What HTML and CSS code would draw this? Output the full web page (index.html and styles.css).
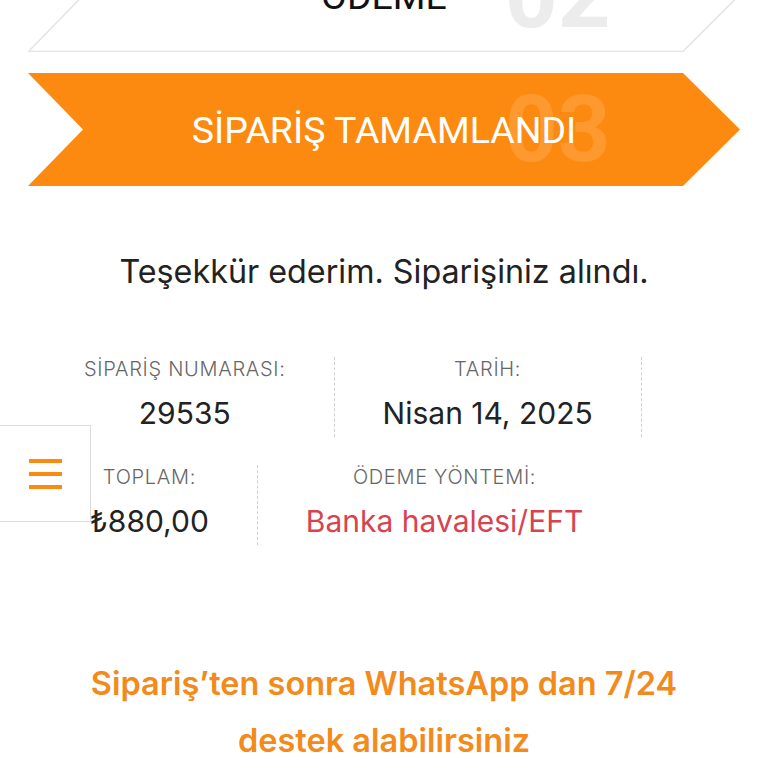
FILE: index.html
```html
<!DOCTYPE html>
<html lang="tr">
<head>
<meta charset="utf-8">
<link rel="stylesheet" href="styles.css">
</head>
<body>
<div class="steps">
  <div class="step step-done">
    <svg class="step-bg" viewBox="0 0 712 113" preserveAspectRatio="none"><polygon points="0.5,0.5 655,0.5 711,56.5 655,112.5 0.5,112.5 55,56.5" fill="#fff" stroke="#e4e4e4" stroke-width="1.5"/></svg>
    <span class="step-num">02</span>
    <span class="step-title">ÖDEME</span>
  </div>
  <div class="step step-active">
    <svg class="step-bg" viewBox="0 0 712 113" preserveAspectRatio="none"><polygon points="0,0 655,0 712,56.5 655,113 0,113 55,56.5" fill="#fd8a10"/></svg>
    <span class="step-num">03</span>
    <span class="step-title">SİPARİŞ TAMAMLANDI</span>
  </div>
</div>

<p class="thanks">Teşekkür ederim. Siparişiniz alındı.</p>

<ul class="overview">
  <li class="ov-item"><span class="ov-label">SİPARİŞ NUMARASI:</span><strong class="ov-value">29535</strong></li>
  <li class="ov-item"><span class="ov-label">TARİH:</span><strong class="ov-value">Nisan 14, 2025</strong></li>
  <li class="ov-item ov-total"><span class="ov-label">TOPLAM:</span><strong class="ov-value">₺880,00</strong></li>
  <li class="ov-item"><span class="ov-label">ÖDEME YÖNTEMİ:</span><strong class="ov-value ov-red">Banka havalesi/EFT</strong></li>
</ul>

<p class="support">Sipariş’ten sonra WhatsApp dan 7/24 destek alabilirsiniz</p>

<div class="menu-btn">
  <span class="bar"></span><span class="bar"></span><span class="bar"></span>
</div>
</body>
</html>
```
FILE: styles.css
```css
html, body {
  margin: 0;
  padding: 0;
  background: #fff;
}
body {
  font-family: Inter, "Noto Sans", sans-serif;
  color: #222;
  overflow: hidden;
}
.steps {
  display: flex;
  flex-direction: column;
  gap: 21px;
  margin: -61px 28px 0 28px;
}
.step {
  position: relative;
  height: 113px;
  display: flex;
  align-items: center;
  justify-content: center;
}
.step-bg {
  position: absolute;
  inset: 0;
  width: 100%;
  height: 100%;
}
.step-title {
  position: relative;
  font-family: Roboto, "Liberation Sans", sans-serif;
  font-size: 37.5px;
  font-weight: 400;
}
.step-num {
  position: absolute;
  left: 477px;
  top: 50%;
  transform: translateY(-50%);
  font-family: Roboto, "Liberation Sans", sans-serif;
  font-size: 92px;
  font-weight: 700;
  line-height: 1;
}
.step-done .step-title { color: #111; }
.step-done .step-num { color: #ececec; }
.step-active .step-title { color: #fff; }
.step-active .step-num { color: rgba(255,255,255,0.13); }

.thanks {
  margin: 65px 0 0;
  text-align: center;
  font-size: 32.3px;
  line-height: 42px;
  color: #222;
}
.overview {
  list-style: none;
  margin: 64px 80px 0 36px;
  padding: 0;
  display: flex;
  flex-wrap: wrap;
  row-gap: 28px;
}
.ov-item {
  display: flex;
  flex-direction: column;
  align-items: center;
  gap: 12px;
  padding: 0 48px 4px;
  border-right: 1px dashed #cfcfcf;
}
.ov-item.ov-total { padding-left: 54px; }
.ov-item:last-child { border-right: none; }
.ov-label {
  font-size: 20px;
  line-height: 24px;
  font-weight: 300;
  color: #666;
  letter-spacing: 0.7px;
}
.ov-value {
  font-size: 30px;
  line-height: 40px;
  font-weight: 400;
  color: #222;
}
.ov-red { color: #d7434f; }

.support {
  margin: 110px 60px 0;
  text-align: center;
  font-size: 32.5px;
  line-height: 57px;
  font-weight: 600;
  color: #f28a1c;
}
.menu-btn {
  position: fixed;
  left: -1px;
  top: 425px;
  width: 92px;
  height: 97px;
  box-sizing: border-box;
  border: 1px solid #dcdcdc;
  background: #fff;
  display: flex;
  flex-direction: column;
  justify-content: center;
  align-items: center;
  gap: 9px;
}
.bar {
  display: block;
  width: 33px;
  height: 4px;
  background: #f98a12;
}
```
